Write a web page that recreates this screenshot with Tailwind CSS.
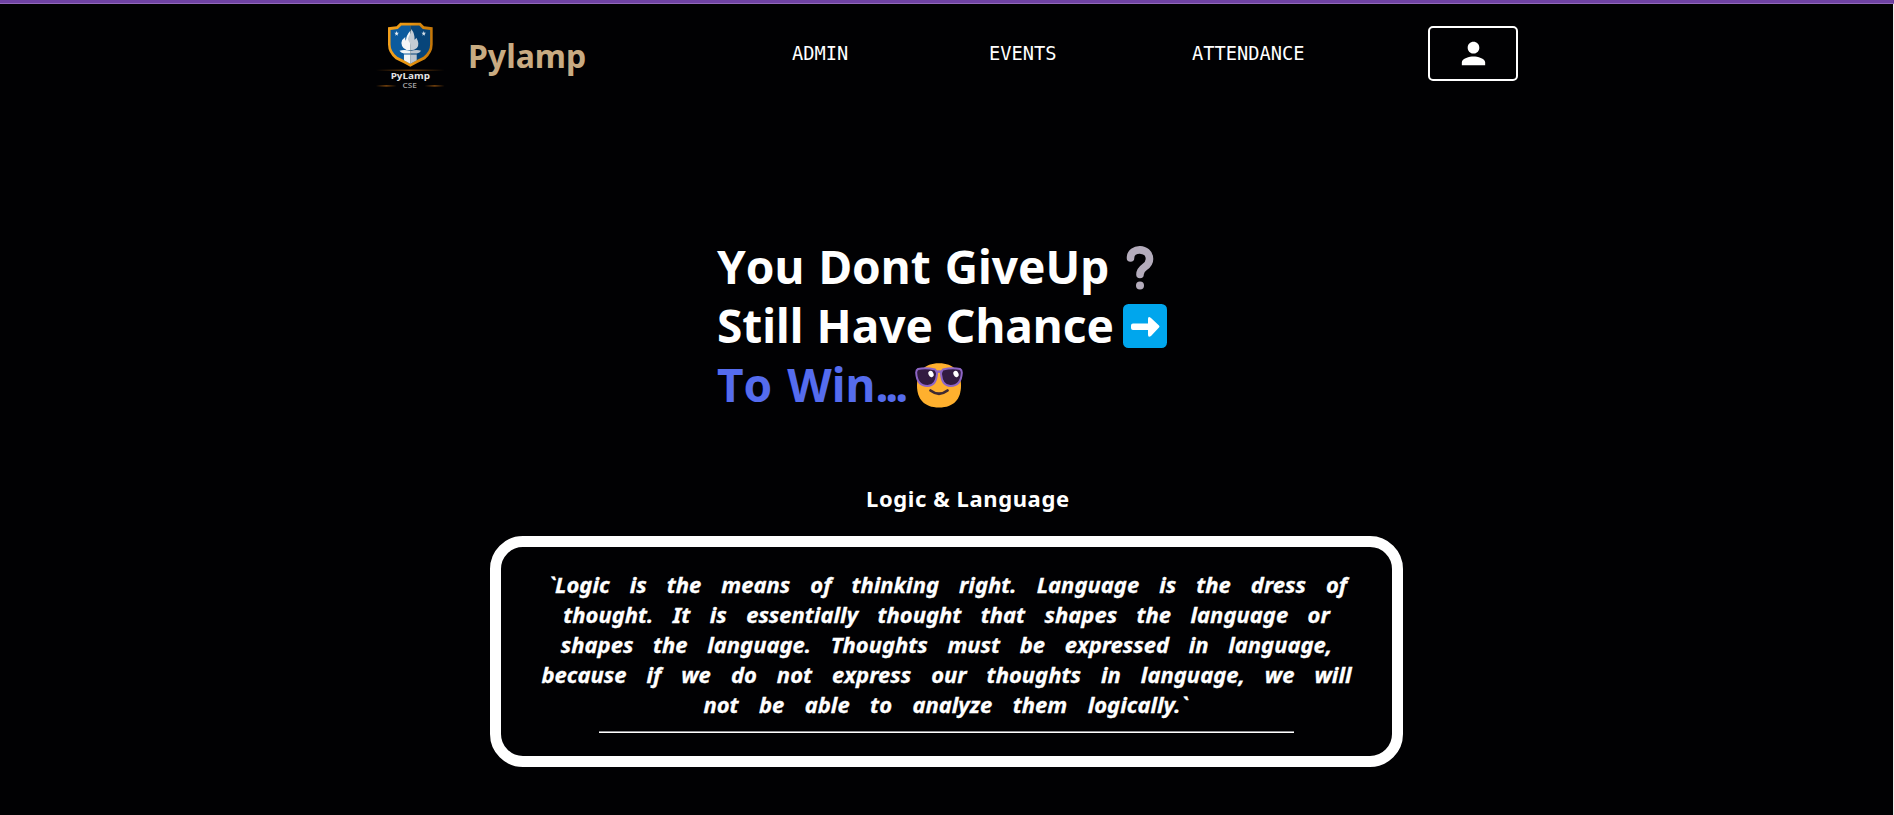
<!DOCTYPE html>
<html lang="en">
<head>
<meta charset="utf-8">
<title>PyLamp</title>
<script src="https://cdn.jsdelivr.net/npm/@tailwindcss/browser@4"></script>
</head>
<body class="h-[815px] overflow-hidden bg-[#010103] text-white">
<div class="h-[815px] border-t-[3px] border-[#6f42a3] font-['Noto_Sans',sans-serif]">
  <div class="h-px bg-[#9268bb]"></div>
  <div class="h-[811px] border-r border-[#ececec]">
  <header class="flex h-[98px] items-start pl-[372px]">
    <svg class="mt-3 h-[78px] w-[76px] shrink-0" viewBox="0 0 228 234">
      <defs>
        <linearGradient id="gold" x1="0" x2="1"><stop offset="0" stop-color="#f3a01c"/><stop offset=".5" stop-color="#e8940f"/><stop offset="1" stop-color="#c47608"/></linearGradient>
        <linearGradient id="rule" x1="0" x2="1"><stop offset="0" stop-color="#a05a10" stop-opacity="0"/><stop offset=".5" stop-color="#a05a10"/><stop offset="1" stop-color="#a05a10" stop-opacity="0"/></linearGradient>
      </defs>
      <g transform="translate(2.100 -4) scale(.957 1.020)">
      <path d="M48 37 L75 34 L86 24 H150 L161 34 L188 37 V88 Q188 113 164 131 Q137 143 118 153 Q99 143 72 131 Q48 113 48 88 Z" fill="url(#gold)"/>
      <path d="M56 45 L79 42 L90 32 H118 V144 Q99 134 77 124 Q56 108 56 88 Z" fill="#0c5b9e"/>
      <path d="M180 45 L157 42 L146 32 H118 V144 Q137 134 159 124 Q180 108 180 88 Z" fill="#07457a"/>
      <path d="M118 105 Q91 104 90 83 Q91 73 102 66 Q101 73 104 77 Q105 60 118 47 Z" fill="#f4f6f8"/>
      <path d="M118 105 Q145 104 143 84 Q142 77 137 68 Q134 73 131 74 Q133 57 121 42 Q121 54 113 64 Q108 71 113 78 Q119 83 118 91 Z" fill="#c4ccd4"/>
      <path d="M84 106 Q100 102 118 107 V114 H98 Q88 113 84 106 Z M98 117 H118 V144 L98 134 Z" fill="#f4f6f8"/>
      <path d="M152 106 Q136 102 118 107 V114 H138 Q148 113 152 106 Z M138 117 H118 V144 L138 134 Z" fill="#bcc5ce"/>
      <path d="M75 48 l2 5 h5 l-4 4 1 5 -4 -3 -4 3 1 -5 -4 -4 h5z" fill="#e8f0f6"/>
      <path d="M160 48 l2 5 h5 l-4 4 1 5 -4 -3 -4 3 1 -5 -4 -4 h5z" fill="#d5e0ea"/>
      </g>
      <rect x="12" y="161" width="206" height="3" fill="url(#rule)"/>
      <rect x="12" y="208" width="62" height="3.500" fill="url(#rule)"/>
      <rect x="158" y="208" width="60" height="3.500" fill="url(#rule)"/>
      <text x="115" y="190" text-anchor="middle" textLength="118" lengthAdjust="spacingAndGlyphs" class="font-['Open_Sans'] text-[25px] font-bold" fill="#e4e4e4">PyLamp</text>
      <text x="113" y="216" text-anchor="middle" textLength="43" lengthAdjust="spacingAndGlyphs" class="font-['Open_Sans'] text-[19px] font-semibold" fill="#a5a5a5">CSE</text>
    </svg>
    <h1 class="ml-[20px] mt-[30px] w-[324px] text-[32px] font-bold leading-[44px] text-[#c8ab82]">Pylamp</h1>
    <nav class="mt-[38px] flex font-['DejaVu_Sans_Mono',monospace] text-[18.700px] leading-6">
      <a class="w-[197px]">ADMIN</a>
      <a class="w-[203px]">EVENTS</a>
      <a class="w-[236px]">ATTENDANCE</a>
    </nav>
    <button class="mt-[22px] flex h-[55px] w-[90px] items-center justify-center rounded-[5px] border-2 border-white">
      <svg class="size-[35px]" viewBox="0 0 24 24" fill="#fff"><path d="M12 12c2.210 0 4-1.790 4-4s-1.790-4-4-4-4 1.790-4 4 1.790 4 4 4zm0 2c-2.670 0-8 1.340-8 4v2h16v-2c0-2.660-5.330-4-8-4z"/></svg>
    </button>
  </header>

  <main>
    <h2 class="ml-[717px] mt-[133px] text-[46px] font-bold leading-[63px] [font-kerning:none]">
      <span class="flex h-[59px] items-start whitespace-pre"><span class="w-[409px] [word-spacing:2px]">You Dont GiveUp</span><svg class="mt-[11px] h-[44px] w-[28px]" viewBox="0 0 28 44"><path d="M4.500 12 C4.500 1 23.500 1 23.500 13 C23.500 22 14 20 14 28.500" fill="none" stroke="#b4acbc" stroke-width="7.600" stroke-linecap="round"/><circle cx="14" cy="39.500" r="4" fill="#b4acbc"/></svg></span>
      <span class="flex h-[59px] items-start whitespace-pre"><span class="w-[406px] [word-spacing:1px]">Still Have Chance</span><svg class="mt-[10px] size-[44px]" viewBox="0 0 44 44"><rect width="44" height="44" rx="5.500" fill="#00a6ed"/><path d="M10 19.500 H25 V15 Q25 11.500 28 14 L36 21.500 Q37 22.500 36 23.500 L28 32 Q25 34 25 30.500 V26 H10 Q8 26 8 24 V21.500 Q8 19.500 10 19.500Z" fill="#fff"/></svg></span>
      <span class="flex h-[59px] items-start whitespace-pre text-[#556cee]"><span class="w-[198px] [word-spacing:3px]">To Win<span class="tracking-[-3px]">...</span></span><svg class="mt-[10px] h-[45px] w-[48px]" viewBox="0 0 48 45"><path d="M24 .3 C39 .3 46 9 46 22.500 C46 36 39 44.500 24 44.500 C9 44.500 2 36 2 22.500 C2 9 9 .3 24 .3Z" fill="#ffb02e"/><path d="M15.500 27.500 Q24 34 32.500 27.500" fill="none" stroke="#402a32" stroke-width="2.800" stroke-linecap="round"/><path d="M3 6 Q11 4.500 20 6.500 Q22 8 22 11 Q21 23 12.500 23 Q2 23 1.200 10 Q1 7 3 6Z M45 6 Q37 4.500 28 6.500 Q26 8 26 11 Q27 23 35.500 23 Q46 23 46.800 10 Q47 7 45 6Z" fill="#321b41" stroke="#8d65c5" stroke-width="2"/><path d="M21 9.500 Q24 7.500 27 9.500" fill="none" stroke="#8d65c5" stroke-width="2.600"/><ellipse cx="16" cy="11" rx="2.500" ry="3.200" transform="rotate(-25 16 11)" fill="#fff"/><ellipse cx="41" cy="11" rx="2.500" ry="3.200" transform="rotate(-25 41 11)" fill="#fff"/></svg></span>
    </h2>
    <h3 class="ml-[866px] mt-[71px] text-[22px] font-bold leading-[30px] tracking-[0.6px]">Logic &amp; Language</h3>
    <section class="ml-[490px] mt-[23px] h-[231px] w-[913px] rounded-[33px] border-[11px] border-white pt-[22px]">
      <p class="text-center text-[22px] font-bold italic leading-[30px] whitespace-nowrap [-webkit-text-stroke:0.3px_white]">
        <span class="block pl-[2px] [word-spacing:14.3px]">`Logic is the means of thinking right. Language is the dress of</span>
        <span class="block [word-spacing:13.7px]">thought. It is essentially thought that shapes the language or</span>
        <span class="block [word-spacing:13.9px]">shapes the language. Thoughts must be expressed in language,</span>
        <span class="block [word-spacing:14.3px]">because if we do not express our thoughts in language, we will</span>
        <span class="block pr-[2px] [word-spacing:14.7px]">not be able to analyze them logically.`</span>
      </p>
      <div class="mx-auto mt-3 h-[2px] w-[695px] border-t border-[#8f8f93] bg-white"></div>
    </section>
  </main>
  </div>
</div>
</body>
</html>
